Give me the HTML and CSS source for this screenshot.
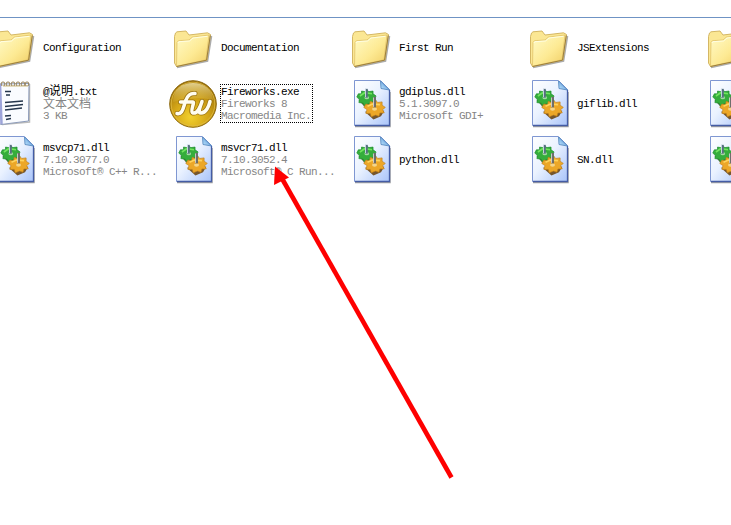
FILE: index.html
```
<!DOCTYPE html>
<html lang="zh-CN">
<head>
<meta charset="utf-8">
<title>Fireworks 8</title>
<link rel="stylesheet" href="styles.css">
</head>
<body>
<svg class="defs" aria-hidden="true">
  <defs>
    <linearGradient id="fold" x1="0" y1="0" x2="1" y2="1"><stop offset="0" stop-color="#fffbc9"/><stop offset=".55" stop-color="#fdea94"/><stop offset="1" stop-color="#f0cc62"/></linearGradient>
    <linearGradient id="paper" x1="0" y1="0" x2="1" y2="1"><stop offset="0" stop-color="#fff"/><stop offset=".45" stop-color="#eaf2ff"/><stop offset="1" stop-color="#a9c4fa"/></linearGradient>
    <linearGradient id="corner" x1="0" y1="1" x2="1" y2="0"><stop offset="0" stop-color="#c7e8ff"/><stop offset="1" stop-color="#3b86cf"/></linearGradient>
    <radialGradient id="gold" cx=".45" cy=".78" r=".75"><stop offset="0" stop-color="#f2d02e"/><stop offset=".5" stop-color="#d3a517"/><stop offset="1" stop-color="#9a6f0a"/></radialGradient>
    <linearGradient id="shine" x1="0" y1="0" x2="0" y2="1"><stop offset="0" stop-color="#fff8c8" stop-opacity=".7"/><stop offset="1" stop-color="#ecc94e" stop-opacity=".15"/></linearGradient>
    <symbol id="folder" viewBox="0 0 48 48">
      <path d="M8 43.500 38.500 37 42.500 12" fill="none" stroke="#666" stroke-width="1.600" opacity=".55"/>
      <path d="M5.500 12.500 6.500 9 8 7.800 17 7 20 11 38.500 8.800 41.500 10.500 38 36 7.500 42.500 5.500 39z" fill="#fbe794" stroke="#cfb059" stroke-width=".9"/>
      <path d="M8 18.500 9.500 16.700 20 16 23.500 13 40 11 37 35.800 7.500 42.300z" fill="url(#fold)" stroke="#dcbc60" stroke-width=".7"/>
      <path d="M9 19 9.800 17.700 20.500 17 24 14 38.500 12.300" fill="none" stroke="#fffee2"/>
      <path d="M7.500 42.500 37.500 36.200 41.300 11.500" fill="none" stroke="#9c7f3d"/>
    </symbol>
    <symbol id="dll" viewBox="0 0 48 48">
      <path d="M8 46.500H43V12" fill="none" stroke="#555" stroke-width="1.500" opacity=".55"/>
      <path d="M7.500 .5H33.500L42.500 9.500V45.500H7.500z" fill="url(#paper)" stroke="#7f97d2"/>
      <path d="M8 45.500H42.500V10" fill="none" stroke="#445ca5" stroke-width="1.300"/>
      <path d="M33.500 1 42.500 10 34 8.500z" fill="url(#corner)" stroke="#4c81ba" stroke-width=".8"/>
      <g transform="translate(-.2 .6) scale(1.050 1.100)">
        <path d="M11 17.500 17 24 24 22 26.500 19 24 18z" fill="#596d43"/>
        <path d="M11 12 14 12 14 9.500 17 10 19 8.500 21 10 25 9.500 25 12 28 14 26 16 28 18.500 24.500 19 24 22 20.500 21 17 23 15.500 20.500 11.500 20 12 17 9.500 15z" fill="#35ad3c" stroke="#188a2a" stroke-width=".6"/>
        <path d="M12.500 14 17 11 24 12" fill="none" stroke="#72e45f" stroke-width="1.500"/>
        <ellipse cx="19" cy="15.500" rx="2.200" ry="1.500" fill="#a1d9a0"/>
        <path d="M17.500 7.500H20V15.500H17.500z" fill="#576f80"/><path d="M17.800 7.500V15" stroke="#d4e1ec" stroke-width=".8"/>
      </g>
      <g transform="translate(-2.700 -1.200) scale(1.080 1.100)">
        <path d="M19 30 27 37 34 34 37 29z" fill="#76562c"/>
        <path d="M20 23 23.500 23.500 24 20.500 27 21.500 29.500 20 31 21.500 35 21 35 24 38 26 35.500 28 37 31 33 31 32 34 29 33 25 34.500 24 31.500 20 31.500 21 28 18 26z" fill="#eca728" stroke="#c08018" stroke-width=".6"/>
        <path d="M21.500 25 26 23 33 23.500" fill="none" stroke="#ffd45c" stroke-width="1.500"/>
        <ellipse cx="28" cy="27.500" rx="2.300" ry="1.600" fill="#f5d58a"/>
        <path d="M26.800 16.500H29.300V26H26.800z" fill="#696966"/><path d="M27.100 17V25.500" stroke="#ddd" stroke-width=".8"/>
      </g>
    </symbol>
    <symbol id="txt" viewBox="0 0 48 48">
      <path d="M11 44.500 38.500 42V4" fill="none" stroke="#777" stroke-width="1.500" opacity=".5"/>
      <path d="M8 4 38 3.500 37.500 41 10 44.500 6 42z" fill="#fafcff" stroke="#8d9cba"/>
      <path d="M9 4 10.500 44" stroke="#9da4d9" stroke-width="2.500"/>
      <path d="M12 6H37" stroke="#ddd0a7" stroke-width="1.500"/>
      <path d="M11 6q-2-4 1-4t1 4m3 0q-2-4 1-4t1 4m3 0q-2-4 1-4t1 4m3 0q-2-4 1-4t1 4m3 0q-2-4 1-4t1 4m2 0q-2-4 1-4t1 4" fill="none" stroke="#937e54"/>
      <path d="M14 11.500H20M15 15H19M14 22.500 32 21M14 26.500 32 24.500M14 30 31 28M14 36 20 35.500M15 39.500 20 38.500" fill="none" stroke="#25364c" stroke-width="1.300"/>
    </symbol>
    <symbol id="fw" viewBox="0 0 48 48">
      <circle cx="24" cy="24" r="23.300" fill="url(#gold)" stroke="#8b670c"/>
      <circle cx="24" cy="24" r="21.800" fill="none" stroke="#e0bb43" stroke-width=".8"/>
      <path d="M4 22C4 9 13 3 24 3s20 7 20 17C32 17 18 18 4 22z" fill="url(#shine)"/>
      <g fill="none" stroke-linecap="round" stroke-linejoin="round">
        <path d="M8 33.500C14 35 14 27 17 20 19 14.500 22 13 26 13.500M11.500 22H24C26 22 20.500 32 24 33 28 34 31.500 27 33 21.500M33 21.500C30 30 29 33 32 33 37 33 40 26 41 21.500" stroke="#9b730f" stroke-width="5"/>
        <path d="M8 33.500C14 35 14 27 17 20 19 14.500 22 13 26 13.500M11.500 22H24C26 22 20.500 32 24 33 28 34 31.500 27 33 21.500M33 21.500C30 30 29 33 32 33 37 33 40 26 41 21.500" stroke="#fffdf0" stroke-width="3.500"/>
      </g>
    </symbol>
  </defs>
</svg>
<main class="window">
  <div class="toolbar-edge"></div>
  <div class="files">
    <div class="item"><svg class="icon"><use href="#folder"/></svg><div class="label"><b>Configuration</b></div></div>
    <div class="item"><svg class="icon"><use href="#folder"/></svg><div class="label"><b>Documentation</b></div></div>
    <div class="item"><svg class="icon"><use href="#folder"/></svg><div class="label"><b>First Run</b></div></div>
    <div class="item"><svg class="icon"><use href="#folder"/></svg><div class="label"><b>JSExtensions</b></div></div>
    <div class="item"><svg class="icon"><use href="#folder"/></svg></div>

    <div class="item"><svg class="icon"><use href="#txt"/></svg><div class="label"><b class="mixed">@<span class="cjk">说明</span>.txt</b><span class="cjk type">文本文档</span><span>3 KB</span></div></div>
    <div class="item"><svg class="icon"><use href="#fw"/></svg><div class="label focused"><b>Fireworks.exe</b><span>Fireworks 8</span><span>Macromedia Inc.</span></div></div>
    <div class="item"><svg class="icon"><use href="#dll"/></svg><div class="label"><b>gdiplus.dll</b><span>5.1.3097.0</span><span>Microsoft GDI+</span></div></div>
    <div class="item"><svg class="icon"><use href="#dll"/></svg><div class="label"><b>giflib.dll</b></div></div>
    <div class="item"><svg class="icon"><use href="#dll"/></svg></div>

    <div class="item"><svg class="icon"><use href="#dll"/></svg><div class="label"><b>msvcp71.dll</b><span>7.10.3077.0</span><span>Microsoft® C++ R...</span></div></div>
    <div class="item"><svg class="icon"><use href="#dll"/></svg><div class="label"><b>msvcr71.dll</b><span>7.10.3052.4</span><span>Microsoft® C Run...</span></div></div>
    <div class="item"><svg class="icon"><use href="#dll"/></svg><div class="label"><b>python.dll</b></div></div>
    <div class="item"><svg class="icon"><use href="#dll"/></svg><div class="label"><b>SN.dll</b></div></div>
    <div class="item"><svg class="icon"><use href="#dll"/></svg></div>
  </div>
  <svg class="arrow" viewBox="0 0 731 525">
    <path d="M280 175 451.500 477.500" stroke="#fe0000" stroke-width="4.600"/>
    <path d="M275 166.500 289 177.500 274 185z" fill="#fe0000"/>
  </svg>
</main>
</body>
</html>
```
FILE: styles.css
```
body {
  margin: 0;
  background: #fff;
}

.defs {
  position: absolute;
  width: 0;
  height: 0;
}

.window {
  position: relative;
  width: 731px;
  height: 525px;
  overflow: hidden;
}

.toolbar-edge {
  height: 17px;
  border-bottom: 1px solid #6f93c4;
}

.files {
  display: grid;
  grid-template-columns: repeat(5, 178px);
  grid-auto-rows: 48px;
  row-gap: 8px;
  margin-left: -9px;
  padding-top: 6px;
}

.item {
  display: flex;
  align-items: center;
  gap: 3px;
}

.icon {
  flex: none;
  width: 48px;
  height: 48px;
}

.label {
  display: flex;
  flex-direction: column;
  padding: 1px 1px 0;
  margin-top: -1px;
  font: 11px/12px "Liberation Mono", "Noto Sans CJK SC", monospace;
  letter-spacing: -0.6px;
  white-space: pre;
  color: #858585;
}

.label b {
  font-weight: 400;
  color: #000;
}

.label span {
  display: block;
  height: 12px;
}

.label .cjk {
  font-size: 12px;
  letter-spacing: 0;
}

.label .type {
  height: 11px;
  padding-top: 1px;
}

.label .mixed {
  display: flex;
  height: 12px;
}

.focused {
  outline: 1px dotted #000;
  outline-offset: -1px;
  padding: 1px 2px 1px 1px;
  margin-top: -2px;
}

.focused b {
  margin-top: 1px;
}

.arrow {
  position: absolute;
  inset: 0;
  width: 731px;
  height: 525px;
}
```
